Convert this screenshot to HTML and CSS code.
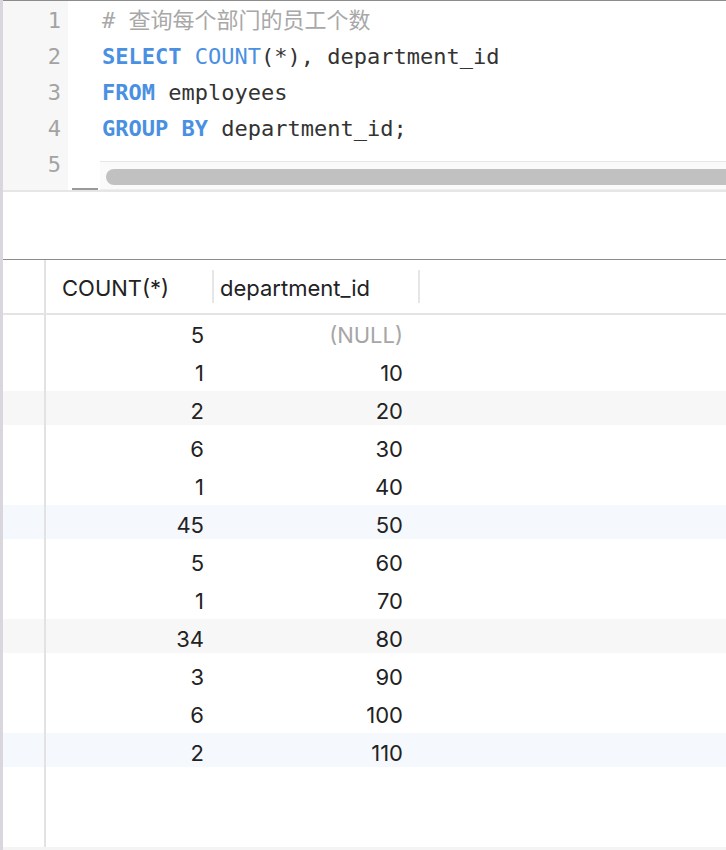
FILE: index.html
```html
<!DOCTYPE html>
<html lang="zh">
<head>
<meta charset="utf-8">
<title>SQL</title>
<link rel="stylesheet" href="styles.css">
</head>
<body>
<div class="app">
  <div class="edge"></div>
  <div class="main">
    <div class="editor">
      <div class="gutter">
        <div class="ln">1</div>
        <div class="ln">2</div>
        <div class="ln">3</div>
        <div class="ln">4</div>
        <div class="ln">5</div>
      </div>
      <div class="code">
        <div class="line"><span class="cm"># 查询每个部门的员工个数</span></div>
        <div class="line"><span class="kw">SELECT</span> <span class="fn">COUNT</span>(*), department_id</div>
        <div class="line"><span class="kw">FROM</span> employees</div>
        <div class="line"><span class="kw">GROUP BY</span> department_id;</div>
        <div class="line"></div>
      </div>
      <div class="hscroll"><div class="thumb"></div></div>
      <div class="corner"></div>
    </div>
    <div class="spacer"></div>
    <div class="grid">
      <div class="hrow">
        <div class="c0"></div>
        <div class="hcell h1">COUNT(*)</div>
        <div class="hsep"></div>
        <div class="hcell h2">department_id</div>
        <div class="hsep"></div>
      </div>
      <div class="row"><div class="c0"></div><div class="c1">5</div><div class="c2 null">(NULL)</div></div>
      <div class="row"><div class="c0"></div><div class="c1">1</div><div class="c2">10</div></div>
      <div class="row gray"><div class="c0"></div><div class="c1">2</div><div class="c2">20</div></div>
      <div class="row"><div class="c0"></div><div class="c1">6</div><div class="c2">30</div></div>
      <div class="row"><div class="c0"></div><div class="c1">1</div><div class="c2">40</div></div>
      <div class="row blue"><div class="c0"></div><div class="c1">45</div><div class="c2">50</div></div>
      <div class="row"><div class="c0"></div><div class="c1">5</div><div class="c2">60</div></div>
      <div class="row"><div class="c0"></div><div class="c1">1</div><div class="c2">70</div></div>
      <div class="row gray"><div class="c0"></div><div class="c1">34</div><div class="c2">80</div></div>
      <div class="row"><div class="c0"></div><div class="c1">3</div><div class="c2">90</div></div>
      <div class="row"><div class="c0"></div><div class="c1">6</div><div class="c2">100</div></div>
      <div class="row blue"><div class="c0"></div><div class="c1">2</div><div class="c2">110</div></div>
      <div class="filler"><div class="c0"></div></div>
    </div>
  </div>
</div>
</body>
</html>
```
FILE: styles.css
```css
html, body {
  margin: 0;
  padding: 0;
  background: #ffffff;
}
body {
  width: 726px;
  height: 850px;
  overflow: hidden;
}
.app {
  display: flex;
  height: 850px;
}
.edge {
  width: 3px;
  background: #d9d7dd;
  flex: none;
}
.main {
  flex: 1;
  display: flex;
  flex-direction: column;
  min-width: 0;
}
.editor {
  position: relative;
  display: flex;
  height: 189px;
  border-top: 1px solid #8c8c8c;
  border-bottom: 2px solid #e6e6e6;
  font-family: "DejaVu Sans Mono", "Noto Sans CJK SC", monospace;
  font-size: 22px;
  line-height: 36px;
  color: #333333;
  overflow: hidden;
  flex: none;
}
.gutter {
  width: 58px;
  padding: 2px 7px 0 0;
  background: #f7f7f7;
  color: #a3a3a3;
  text-align: right;
  flex: none;
}
.code {
  padding: 2px 0 0 34px;
}
.line {
  height: 36px;
  white-space: pre;
}
.kw {
  color: #4a90e2;
  font-weight: bold;
}
.fn {
  color: #4a90e2;
}
.cm {
  color: #a8a8a8;
}
.hscroll {
  position: absolute;
  left: 97px;
  right: 0;
  top: 160px;
  height: 27px;
  background: #fafafa;
  border-top: 1px solid #e6e6e6;
  border-bottom: 1px solid #ededed;
}
.thumb {
  margin: 7px 0 0 6px;
  height: 16px;
  background: #c1c1c1;
  border-radius: 8px 0 0 8px;
}
.corner {
  position: absolute;
  left: 69px;
  top: 187px;
  width: 24px;
  height: 4px;
  border: 1px solid #9a9a9a;
  border-top-width: 2px;
  background: #ffffff;
}
.spacer {
  height: 67px;
  flex: none;
}
.grid {
  flex: 1;
  display: flex;
  flex-direction: column;
  border-top: 1px solid #8c8c8c;
  font-family: Inter, "Liberation Sans", sans-serif;
  font-size: 22px;
  color: #222222;
}
.hrow {
  display: flex;
  align-items: center;
  height: 53px;
  border-bottom: 2px solid #e4e4e4;
  flex: none;
}
.c0 {
  width: 41px;
  align-self: stretch;
  border-right: 2px solid #e2e2e2;
  flex: none;
}
.hcell {
  line-height: 28px;
  padding-top: 2px;
}
.h1 {
  width: 150px;
  padding-left: 16px;
}
.h2 {
  width: 198px;
  padding-left: 6px;
}
.hsep {
  width: 2px;
  height: 33px;
  background: #e6e6e6;
  flex: none;
}
.row {
  display: flex;
  height: 38px;
  flex: none;
}
.row.gray {
  background: linear-gradient(to bottom, #f7f7f7 0, #f7f7f7 34px, transparent 34px);
}
.row.blue {
  background: linear-gradient(to bottom, #f5f8fd 0, #f5f8fd 34px, transparent 34px);
}
.c1, .c2 {
  text-align: right;
  padding-top: 7px;
  line-height: 26px;
}
.c1 {
  width: 158px;
  padding-right: 8px;
}
.c2 {
  width: 191px;
  padding-right: 15px;
}
.null {
  color: #a6a6a6;
}
.filler {
  flex: 1;
  display: flex;
  border-bottom: 3px solid #f4f4f4;
}
```
